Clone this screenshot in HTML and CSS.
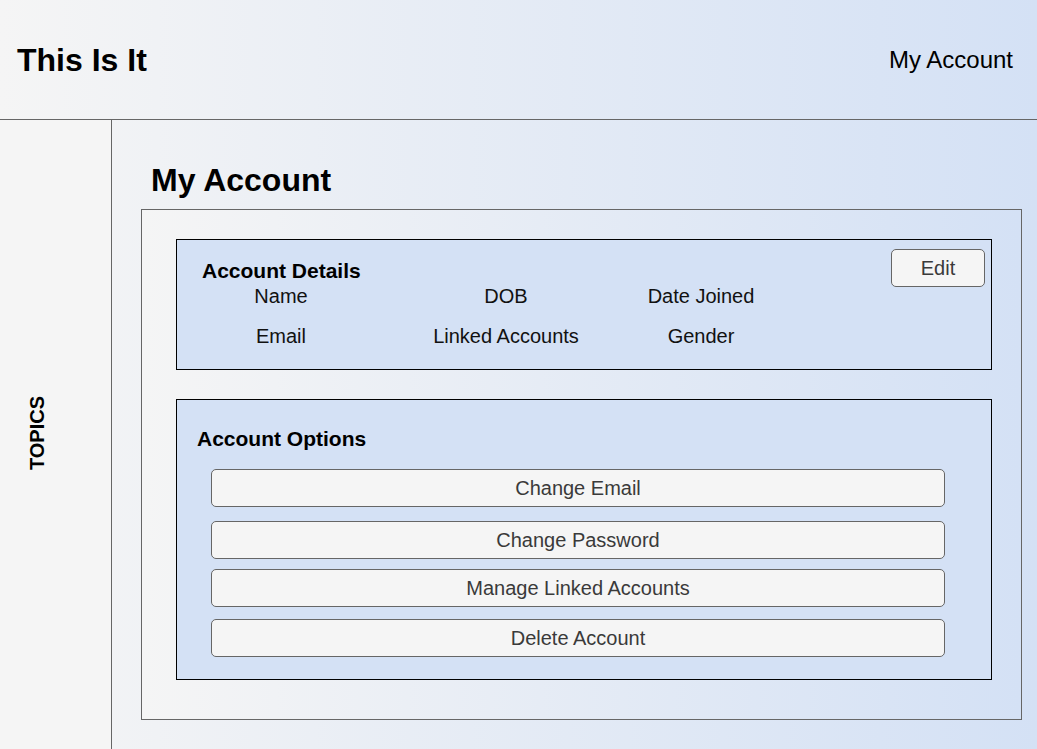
FILE: index.html
```html
<!DOCTYPE html>
<html lang="en">
<head>
<meta charset="utf-8">
<title>This Is It - My Account</title>
<link rel="stylesheet" href="styles.css">
</head>
<body>
<div class="app">
  <header class="topbar">
    <h1 class="brand">This Is It</h1>
    <a class="nav-link" href="#">My Account</a>
  </header>
  <div class="main-area">
    <aside class="sidebar">
      <span class="topics">TOPICS</span>
    </aside>
    <main class="content">
      <h2 class="page-title">My Account</h2>
      <section class="panel">
        <div class="card details">
          <div class="details-body">
            <h3 class="card-title">Account Details</h3>
            <div class="fields">
              <span class="field">Name</span>
              <span class="field">DOB</span>
              <span class="field">Date Joined</span>
              <span class="field">Email</span>
              <span class="field">Linked Accounts</span>
              <span class="field">Gender</span>
            </div>
          </div>
          <button class="btn edit-btn" type="button">Edit</button>
        </div>
        <div class="card options">
          <h3 class="card-title options-title">Account Options</h3>
          <div class="option-list">
            <button class="btn option-btn" type="button">Change Email</button>
            <button class="btn option-btn" type="button">Change Password</button>
            <button class="btn option-btn" type="button">Manage Linked Accounts</button>
            <button class="btn option-btn" type="button">Delete Account</button>
          </div>
        </div>
      </section>
    </main>
  </div>
</div>
</body>
</html>
```
FILE: styles.css
```css
* {
  box-sizing: border-box;
}

html, body {
  margin: 0;
  padding: 0;
}

body {
  font-family: "Liberation Sans", Arial, Helvetica, sans-serif;
  color: #000;
  background: #f5f5f5;
}

.app {
  width: 1037px;
  height: 749px;
  display: flex;
  flex-direction: column;
  overflow: hidden;
  background: linear-gradient(to right, #f5f5f5, #d4e1f5);
}

/* Top bar */
.topbar {
  height: 120px;
  flex: 0 0 120px;
  display: flex;
  align-items: center;
  justify-content: space-between;
  padding: 0 24px 0 17px;
  border-bottom: 1px solid #666;
  background: linear-gradient(to right, #f5f5f5, #d4e1f5);
}

.brand {
  margin: 0;
  font-size: 32px;
  line-height: 36px;
  font-weight: bold;
  padding-top: 1px;
}

.nav-link {
  font-size: 24px;
  line-height: 28px;
  color: #000;
  text-decoration: none;
}

/* Body */
.main-area {
  flex: 1;
  display: flex;
  min-height: 0;
}

.sidebar {
  width: 112px;
  flex: 0 0 112px;
  background: #f5f5f5;
  border-right: 1px solid #666;
  display: flex;
  align-items: center;
  padding-left: 27px;
}

.topics {
  writing-mode: vertical-rl;
  transform: rotate(180deg);
  font-size: 20px;
  line-height: 20px;
  font-weight: bold;
  margin-top: -2px;
}

.content {
  flex: 1;
  display: flex;
  flex-direction: column;
  padding: 42px 15px 29px 29px;
}

.page-title {
  margin: 0 0 11px 10px;
  font-size: 32px;
  line-height: 36px;
  font-weight: bold;
}

.panel {
  flex: 1;
  border: 1px solid #666;
  background: linear-gradient(to right, #f5f5f5, #d4e1f5);
  padding: 29px 29px 39px 34px;
  display: flex;
  flex-direction: column;
  gap: 29px;
}

.card {
  background: #d4e1f5;
  border: 1px solid #000;
}

.card-title {
  margin: 0;
  font-size: 21px;
  line-height: 24px;
  font-weight: bold;
}

/* Details card */
.details {
  height: 131px;
  display: flex;
  align-items: flex-start;
  padding: 9px 6px 0 0;
}

.details-body {
  flex: 1;
  padding-top: 10px;
}

.details .card-title {
  padding-left: 25px;
  margin-bottom: 1px;
}

.fields {
  display: grid;
  grid-template-columns: 208px 242px 148px;
  row-gap: 16px;
  font-size: 20px;
  line-height: 24px;
  color: #111;
}

.field {
  text-align: center;
}

.btn {
  font-family: "Liberation Sans", Arial, Helvetica, sans-serif;
  font-size: 20px;
  line-height: 24px;
  color: #3a3a3a;
  background: #f5f5f5;
  border: 1px solid #666;
  border-radius: 5px;
  padding: 0;
  cursor: pointer;
}

.edit-btn {
  width: 94px;
  height: 38px;
}

/* Options card */
.options {
  height: 281px;
  padding: 27px 0 0 20px;
}

.option-list {
  display: flex;
  flex-direction: column;
  padding: 18px 0 0 14px;
}

.option-btn {
  width: 734px;
  height: 38px;
}

.option-btn:nth-child(1) {
  margin-bottom: 14px;
}

.option-btn:nth-child(2) {
  margin-bottom: 10px;
}

.option-btn:nth-child(3) {
  margin-bottom: 12px;
}
```
